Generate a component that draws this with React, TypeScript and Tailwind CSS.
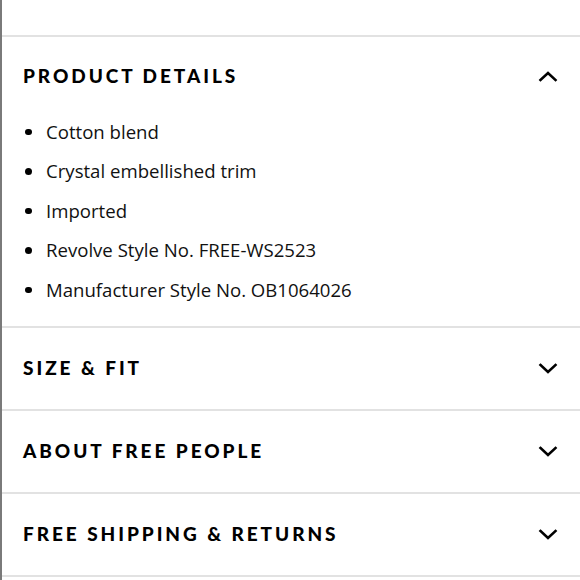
import React, { useState } from 'react';

const details = [
  'Cotton blend',
  'Crystal embellished trim',
  'Imported',
  'Revolve Style No. FREE-WS2523',
  'Manufacturer Style No. OB1064026',
];

const sections = ['SIZE & FIT', 'ABOUT FREE PEOPLE', 'FREE SHIPPING & RETURNS'];

function Chevron({ up }: { up?: boolean }) {
  return (
    <svg width="20" height="12" viewBox="0 0 20 12" fill="none" stroke="#000" strokeWidth={2.6} strokeLinecap="square">
      <path d={up ? 'M2.5 10L10 3l7.5 7' : 'M2.5 2L10 9l7.5-7'} />
    </svg>
  );
}

export default function App() {
  const [open, setOpen] = useState(true);

  return (
    <div className="w-[580px] h-[580px] bg-white border-l-2 border-[#7a7a7a] overflow-hidden">
      <div className="h-[35px]" />

      {/* product details */}
      <div className="border-t-2 border-[#e2e2e2]">
        <button
          onClick={() => setOpen(p => !p)}
          className="w-full h-[75px] pt-[3px] pl-[21px] pr-[22px] flex items-center justify-between"
        >
          <span className="font-['Lato'] font-black text-[19px] tracking-[2.95px] text-black">PRODUCT DETAILS</span>
          <Chevron up={open} />
        </button>
        {open && (
          <ul className="pb-[16.5px] pl-[23px]">
            {details.map(d => (
              <li key={d} className="h-[39.5px] flex items-center font-['Open_Sans'] text-[18.6px] text-[#111]">
                <span className="w-[6.5px] h-[6.5px] rounded-full bg-black mr-[14.5px]" />
                {d}
              </li>
            ))}
          </ul>
        )}
      </div>

      {sections.map(s => (
        <div key={s} className="border-t-2 border-[#e2e2e2]">
          <div className="h-[81px] pl-[21px] pr-[22px] flex items-center justify-between">
            <span className="font-['Lato'] font-black text-[19px] tracking-[2.95px] text-black">{s}</span>
            <Chevron />
          </div>
        </div>
      ))}
      <div className="border-t-2 border-[#e2e2e2]" />
    </div>
  );
}
